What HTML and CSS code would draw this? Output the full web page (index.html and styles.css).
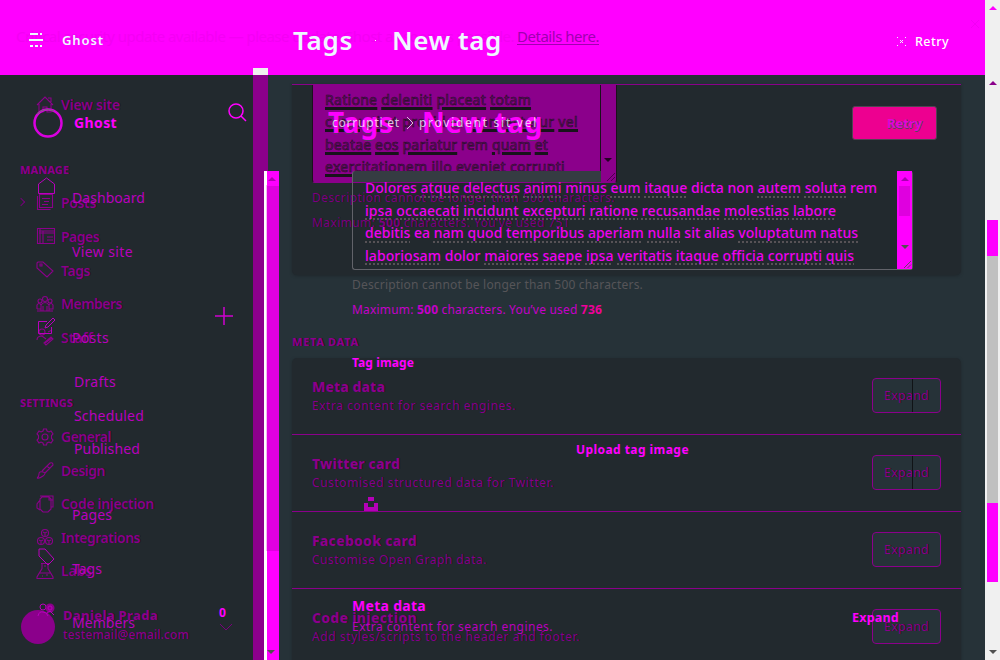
FILE: index.html
```
<!DOCTYPE html>
<html lang="en"><head><meta charset="utf-8"><title>Ghost</title><link rel="stylesheet" href="styles.css"></head>
<body><div class="screen">
<div class="banner">
  <div class="notice"><span data-w="498">Critical security update available — please update Ghost as soon as possible.</span><u data-w="82">Details here.</u></div>
  <svg class="notice-close" viewBox="0 0 8 8"><path d="M0 0l8 8M8 0L0 8"/></svg>
  <div class="bar"><svg class="menu" viewBox="0 0 14 14"><path d="M1 1h8m2 0h2M0 7h14M1 13h3m2 0h3m2 0h2"/></svg><b class="bar-site" data-w="42">Ghost</b><strong class="crumb" data-w="60">Tags</strong><i></i><strong class="crumb" data-w="110">New tag</strong><svg class="spark" viewBox="0 0 9 9"><path d="M0 .5h1m7 0h1M0 8.5h1m7 0h1M3 3.5h1m1 0h1M4 4.5h1M3 5.5h1m1 0h1"/></svg><b class="bar-retry" data-w="34">Retry</b></div>
</div>
<div class="app">
<aside class="side">
  <div class="nav first"><svg viewBox="0 0 16 16"><path d="M0 8L8 0l8 8M2 7v8h4v-5h4v5h4V7M11 1h3v4"/></svg><span data-w="59">View site</span></div>
  <h6 class="manage" data-w="49">MANAGE</h6>
  <div class="nav posts"><em></em><svg viewBox="0 0 16 16"><path d="M2.5.5h13v13h-13zM.5 2v13.5h13M5 4.5h8M7 7.5h5M5 10.5h6"/></svg><span data-w="35">Posts</span></div>
  <div class="nav pages-old"><svg viewBox="0 0 18 17"><path d="M.5.5h17v15H.5zM2 5h16M2 3h16M6 3v13M10 9h6M10 12h6M3 0v16"/></svg><span data-w="38">Pages</span></div>
  <div class="nav"><svg viewBox="0 0 16 16"><path d="M0 1l1-1h5l10 9-6 6L0 6zM3 2v2h2V2z"/></svg><span data-w="29">Tags</span></div>
  <div class="nav"><svg viewBox="0 0 16 16"><circle cx="8" cy="3" r="2.5"/><circle cx="3" cy="5" r="2"/><circle cx="13" cy="5" r="2"/><path d="M4 15V9q4-5 8 0v6M0 13V9q2-3 4 0v4H0m12 0V9q2-3 4 0v4h-4M6 15v-5m4 5v-5M0 15h16"/></svg><span data-w="61">Members</span></div>
  <div class="nav"><svg viewBox="0 0 16 16"><circle cx="5" cy="3" r="3"/><path d="M0 11q0-4 5-4l4 3M7 14l7-6 2 2-7 6zM11 3l4-2M8 14l7-5"/></svg><span data-w="32">Staff</span></div>
  <h6 class="settings" data-w="53">SETTINGS</h6>
  <div class="nav"><svg viewBox="0 0 16 16"><circle cx="8" cy="8" r="3"/><path d="M6.500 0h3l.5 2 2 1 2-1 2 3-1.500 1.500v3L16 11l-2 3-2-1-2 1-.5 2h-3L6 14l-2-1-2 1-2-3 1.500-1.500v-3L0 5l2-3 2 1 2-1z"/></svg><span data-w="50">General</span></div>
  <div class="nav"><svg viewBox="0 0 16 16"><path d="M0 16q2-1 2-4t4-2 0 4-6 2M5 9l8-8q3-1 3 2l-8 8M10 4l3 3"/></svg><span data-w="44">Design</span></div>
  <div class="nav"><svg viewBox="0 0 16 16"><path d="M5 1h7l2 2v10l-3 3H6l-3-3V3zM3 4L0 8v4l3 2M3 0h13v11h-2M12 1v3h4"/></svg><span data-w="93">Code injection</span></div>
  <div class="nav"><svg viewBox="0 0 16 16"><circle cx="8" cy="4" r="3.500"/><circle cx="4" cy="12" r="3.500"/><circle cx="12" cy="12" r="3.500"/><path d="M6 3l2 1 2-1M8 4v3M2 11l2 1 2-1M4 12v3M10 11l2 1 2-1M12 12v3"/></svg><span data-w="79">Integrations</span></div>
  <div class="nav"><svg viewBox="0 0 16 16"><path d="M4 .5h8M5 .5v5L0 14v1.500h16V14l-5-8.500v-5M3 10h10M5 13h1M9 12h2M7 3h2"/></svg><span data-w="31">Labs</span></div>
  <div class="user"><div class="avatar"></div><div><b data-w="95">Daniela Prada</b><p data-w="126">testemail@email.com</p></div></div>
</aside>
<div class="side-track"><s class="down"></s></div>
<main class="main">
  <section class="card top"><div class="old-area"><div class="old-copy">
    <p data-w="206"><u>Ratione</u> <u>deleniti</u> <u>placeat</u> <u>totam</u></p><p data-w="253"><u>corrupti</u> et provident <u>consectetur</u> <u>vel</u></p><p data-w="223"><u>beatae</u> <u>eos</u> <u>pariatur</u> rem <u>quam</u> <u>et</u></p><p data-w="240"><u>exercitationem</u> <u>illo</u> <u>eveniet</u> <u>corrupti</u></p></div><div class="old-track"><s class="down"></s><svg viewBox="0 0 8 8"><path d="M0 8L8 0M4 8l4-4"/></svg></div></div>
    <p class="old-help" data-w="303">Description cannot be longer than 500 characters.</p><p class="old-help max" data-w="258">Maximum: <b>500</b> characters. You’ve used 751</p></section>
  <h6 class="meta" data-w="67">META DATA</h6>
  <section class="card options">
    <div class="option"><div><h4 data-w="73">Meta data</h4><p data-w="204">Extra content for search engines.</p></div><button class="split"><span data-w="45">Expand</span></button></div>
    <div class="option"><div><h4 data-w="88">Twitter card</h4><p data-w="242">Customised structured data for Twitter.</p></div><button class="split"><span data-w="45">Expand</span></button></div>
    <div class="option"><div><h4 data-w="105">Facebook card</h4><p data-w="175">Customise Open Graph data.</p></div><button><span data-w="45">Expand</span></button></div>
    <div class="option"><div><h4 data-w="105">Code injection</h4><p data-w="268">Add styles/scripts to the header and footer.</p></div><button><span data-w="45">Expand</span></button></div>
  </section>
</main>
<div class="page-scroll"><s class="up hot"></s><s class="up dim"></s><div class="thumb"></div><s class="down"></s></div>
</div>
<div class="overlay">
<aside class="front-side">
  <div class="brand"><svg class="ring" viewBox="0 0 32 32"><circle cx="16" cy="16" r="13.500"/><path d="M5 7Q12 0 22 4"/></svg><b data-w="43">Ghost</b><svg class="search" viewBox="0 0 19 19"><circle cx="8" cy="8" r="7"/><path d="M13 13l5 5"/></svg></div>
  <div class="link dash"><svg viewBox="0 0 17 17"><path d="M.5 6l8-6 8 6v9.500H.5z"/></svg><span data-w="73">Dashboard</span></div>
  <div class="link view"><span data-w="61">View site</span></div>
  <div class="link write"><svg viewBox="0 0 17 17"><path d="M9 3.500H.5v12h13V9M7 10l1-3 7-7 2 2-7 7z"/></svg><span data-w="37">Posts</span><svg class="plus" viewBox="0 0 18 18"><path d="M9 0v18M0 9h18"/></svg></div>
  <div class="link drafts"><span data-w="42">Drafts</span></div><div class="link sched"><span data-w="70">Scheduled</span></div><div class="link pub"><span data-w="66">Published</span></div>
  <div class="link pages"><svg viewBox="0 0 17 17"></svg><span data-w="40">Pages</span></div>
  <div class="link tags"><svg viewBox="0 0 17 17"><path d="M1 0h6l9 10-6 6L1 7z"/></svg><span data-w="30">Tags</span></div>
  <div class="link members"><svg viewBox="0 0 17 17"><circle cx="5" cy="4" r="3"/><circle cx="12" cy="5" r="4.500" fill="#8b008b" stroke="none"/><circle cx="12" cy="5" r="2"/><path d="M0 13q1-5 5-4 4 0 5 4M9 10l3-2 4 4"/></svg><span data-w="63">Members</span></div>
</aside>
<div class="edge"><div class="slot"></div></div>
<div class="front-scroll"><s class="up"></s><div class="thumb"></div><s class="down"></s></div>
<section class="front-main">
  <div class="heading"><div class="title"><strong data-w="66">Tags</strong><strong class="new" data-w="121">New tag</strong><div class="ghost-line"><span data-w="68">corrupti et</span><svg viewBox="0 0 7 12"><path d="M0 0l6 6-6 6"/></svg><span data-w="119">provident sit vel</span></div></div><button><b data-w="35">Retry</b></button></div>
  <div class="area"><div class="copy"><p data-w="512">Dolores <u>atque</u> <u>delectus</u> <u>animi</u> minus <u>eum</u> <u>itaque</u> dicta non <u>autem</u> <u>soluta</u> rem</p><p data-w="471"><u>ipsa</u> <u>occaecati</u> <u>incidunt</u> <u>excepturi</u> <u>ratione</u> <u>recusandae</u> <u>molestias</u> <u>labore</u></p><p data-w="493"><u>debitis</u> ea <u>nam</u> <u>quod</u> <u>temporibus</u> <u>aperiam</u> <u>nulla</u> sit alias <u>voluptatum</u> <u>natus</u></p><p data-w="489"><u>laboriosam</u> dolor <u>maiores</u> <u>saepe</u> <u>ipsa</u> <u>veritatis</u> <u>itaque</u> <u>officia</u> <u>corrupti</u> <u>quis</u></p></div><div class="area-track"><s class="up"></s><div class="thumb"></div><s class="down"></s><svg viewBox="0 0 8 8"><path d="M0 8L8 0M4 8l4-4"/></svg></div></div>
  <p class="help grey" data-w="291">Description cannot be longer than 500 characters.</p>
  <p class="help" data-w="250">Maximum: <b>500</b> characters. You’ve used <b class="count">736</b></p>
  <h5 class="tag-image" data-w="62">Tag image</h5><h5 class="upload" data-w="113">Upload tag image</h5>
  <svg class="unsplash" viewBox="0 0 14 14"><path d="M4 0h6v4H4zM0 6h4v4h6V6h4v8H0z"/></svg>
  <div class="front-meta"><div><h4 data-w="74">Meta data</h4><p data-w="201">Extra content for search engines.</p></div><b data-w="47">Expand</b></div>
</section>
<div class="counter"><b data-w="7">0</b><svg viewBox="0 0 12 7"><path d="M0 0l6 6 6-6"/></svg></div>
</div>
</div><script src="fit.js"></script></body></html>
```
FILE: styles.css
```
*{box-sizing:border-box}
body{margin:0;background:#263238;font-family:"Noto Sans","Open Sans",sans-serif;overflow:hidden}
p,h4,h5,h6{margin:0;white-space:nowrap}
span,b,strong{white-space:nowrap}
[data-w]{width:max-content}
span[data-w],b[data-w],u[data-w],strong[data-w]{display:block}
svg{fill:none;stroke:currentColor;stroke-width:1;display:block;flex:none;overflow:visible}
button{font:inherit;color:inherit;padding:0}
s{display:block;width:0;height:0;border:4px solid transparent;flex:none;color:#505050}
.up{border-top:0;border-bottom-color:currentColor}
.down{border-bottom:0;border-top-color:currentColor}
.screen{position:relative;width:1000px;height:660px;overflow:hidden;color:#8b008b}
.banner{position:absolute;z-index:3;left:0;top:0;width:985px;height:75px;background:#f0f}
.notice{display:flex;gap:3px;padding:25px 0 0 16px;height:50px;font-size:15px;line-height:22px;color:#f400f4}
.notice u{color:#a000b0;text-underline-offset:2px}
.notice-close{position:absolute;left:971px;top:20px;width:8px;color:#f200f4}
.bar{position:absolute;left:0;top:23px;width:985px;height:34px;display:flex;align-items:center;color:#eef8ff}
.menu{width:14px;height:14px;margin-left:29px;stroke-width:2.2}
.bar-site{margin-left:19px;font-size:13px;font-weight:600}
.crumb{font-size:26px;line-height:34px;font-weight:600}
.bar-site+.crumb{margin-left:189px}
.bar i{width:1px;height:1px;background:#fff;margin:0 16px 0 22px}
.spark{width:9px;height:9px;margin:2px 0 0 395px}
.bar-retry{margin:2px 0 0 9px;font-size:12.5px;font-weight:500;color:#fff}
.app{display:grid;grid-template-columns:253px 15px 717px 15px;height:660px}
.side{background:#22292e;padding-top:88px;text-shadow:1px 0 0 #17171b}
.nav{height:33.5px;display:flex;align-items:center;padding-left:37px;font-size:14px;font-weight:600}
.nav svg{width:16px;height:16px;margin-right:8px;stroke-width:1.1}
.pages-old svg{width:18px;height:17px;margin:0 6px 0 0}
.pages-old{margin-top:1px}
.nav em{width:6px;height:6px;border:solid #75007a;border-width:1px 1px 0 0;transform:rotate(45deg);margin:0 13px 0 -19px;flex:none}
.side h6,.meta{font-size:11px;line-height:14px;font-weight:800}
.side h6{margin-left:20px}
.manage{margin-top:41px!important;margin-bottom:9px!important}
.settings{margin-top:42px!important;margin-bottom:10px!important}
.user{display:flex;padding:16px 0 0 21px;gap:8px;align-items:flex-start}
.avatar{width:34px;height:34px;border-radius:50%;background:#8b008b;margin-top:6px}
.user b{font-size:13px;line-height:22px;font-weight:800}
.user p{font-size:12px;line-height:18px;font-weight:500}
.side-track{background:#8b008b;display:flex;align-items:flex-end;padding:0 0 6px 3px}
.side-track s{color:#260026}
.main{padding:84px 24px 0 24px;box-shadow:inset 8px 0 #263238}
.card{background:#22292e;border-top:1px solid #8b008b;border-radius:0 0 5px 5px;box-shadow:0 1px 3px #20272c}
.top{height:191px;padding-left:20px;text-shadow:1px 0 0 #19191d}
.old-area{width:305px;height:98px;background:#8b008b;border:1px solid #1a111c;border-top:0;border-bottom-color:#8b008b;display:flex;border-radius:0 0 3px 3px;margin-bottom:5px}
.old-copy{width:287px;padding:4px 0 0 12px;font-size:14px;line-height:22.4px;color:#7a007b;-webkit-text-stroke:.6px #221322;text-shadow:none}
.old-copy u{text-decoration:underline 3px #17131a;text-underline-offset:2px}
.old-track{border-left:1px solid #1a111c;flex:1;padding:73px 0 0 3px}
.old-track s{color:#240024}
.old-track svg{width:8px;height:8px;margin:11px 0 0 3px;color:#4a004d}
.old-help{font-size:12px;line-height:20px;color:#7c0080}
.max{margin-top:5px}
.meta{margin-top:60px;color:#8b008b;text-shadow:1px 0 #15151a}
.options{margin-top:9px;border-top:0;border-radius:5px;height:320px}
.option{height:77px;border-bottom:1px solid #8b008b;padding:20px 20px 0 20px;display:flex;justify-content:space-between;text-shadow:1px 0 0 #17171b}
.option h4{font-size:14px;line-height:18px;font-weight:800}
.option p{font-size:12px;line-height:19px;color:#85008a}
.option button{position:relative;width:69px;height:35px;background:#263238;border:1px solid #8b008b;border-radius:4px;padding-left:11px;font-size:12.5px;text-align:left;text-shadow:1px 0 #17171b}
.split:after{content:"";position:absolute;left:39px;top:0;width:1px;height:33px;background:#101316}
.page-scroll{background:#f0f0f0;padding:6px 0 6px 2px;display:flex;flex-direction:column}
.page-scroll s{margin-left:2px}
.page-scroll .hot{color:#f0f}
.page-scroll .dim{color:#8b008b;margin-top:71px}
.page-scroll .thumb{width:11px;height:362px;margin:135px 0 68px;background:linear-gradient(#f0f 36px,silver 36px 283px,#f0f 283px)}
.overlay{position:absolute;inset:0;display:grid;grid-template-columns:264px 15px 706px;color:#f0f}
.front-side{padding-top:103px;color:#b900bd}
.brand{height:38px;display:flex;align-items:center;padding-left:32px;color:#f0f}
.ring{width:32px;height:32px;stroke-width:2.5;margin:2px 10px 0 0;color:#d900df}
.ring path{stroke:#6f6872;stroke-width:1}
.brand b{font-size:14px}
.search{width:19px;height:19px;margin:-19px 0 0 111px;stroke-width:1.5}
.link{height:20px;display:flex;align-items:center;padding-left:38px;font-size:14px}
.link svg{width:17px;height:17px;margin:-22px 17px 0 0}
.link .plus{width:18px;height:18px;margin:-42px 0 0 106px;stroke-width:1.5;color:#d000d0}
.dash{margin-top:46px}.view{margin-top:34px;padding-left:72px}.write{margin-top:66px}
.drafts{margin-top:24px;padding-left:74px}.sched{margin-top:14px;padding-left:74px}.pub{margin-top:13px;padding-left:74px}
.pages{margin-top:46px}.tags{margin-top:34px}.members{margin-top:34px}
.members svg{width:17px;height:17px}
.front-scroll{margin-top:171px;background:linear-gradient(#f0f 15px,#e000e0 15px 380px,#f0f 380px);display:flex;flex-direction:column;padding:6px 0;border-left:3px solid #fff}
.front-scroll .up{color:#b000b4;margin-left:1px}
.front-scroll .thumb{width:1px;height:366px;margin-top:4px;background:#f5b7f5;margin-left:-1px}
.front-scroll .down{margin-top:99px}
.edge{position:absolute;left:253px;top:68px;width:15px;height:7px;z-index:5}
.slot{background:#f0f0f0;height:7px}
.front-main{padding-top:104px}
.heading{height:67px;display:flex;justify-content:space-between;align-items:flex-start;padding:1px 48px 0 49px}
.title{display:flex;gap:28px;position:relative;font-size:28px;line-height:34px;text-shadow:0 1px #533a60}
.title strong{font-weight:700}
.ghost-line{position:absolute;left:4px;top:10px;display:flex;align-items:center;gap:5px;font-size:12px;line-height:15px;color:#fff;text-shadow:none;opacity:.75}
.ghost-line svg{width:7px;height:12px;margin-left:2px}
.heading button{width:85px;height:34px;margin-top:1px;border:1px solid #514453;border-radius:3px;background:#ed0090;padding-left:34px;font-size:13px;text-align:left;text-shadow:1px 0 #59455b,0 1px #59455b;color:#e600dd}
.area{margin-left:73px;width:561px;height:99px;border:1px solid #62636a;border-top:0;border-right-color:#555;border-radius:3px;display:flex;background:linear-gradient(#353c42,#353c42) 0 0/248px 11px no-repeat}
.copy{width:544px;padding:6px 0 0 12px;font-size:14px;line-height:22.6px;font-weight:500;color:#ef00ef}
.copy u{text-decoration:underline dotted 1.5px #575256;text-underline-offset:3px;text-decoration-skip-ink:none}
.area-track{width:15px;background:#f0f;padding:6px 0 0 2px;color:#505050}
.area-track .up{color:#a800b0;margin-left:2px}
.area-track .down{margin:29px 0 0 2px}
.area-track .thumb{width:11px;height:30px;margin-top:5px;background:#df00df}
.area-track svg{width:7px;height:7px;margin:12px 0 0 5px}
.help{font-size:12px;line-height:20px;margin:5px 0 0 73px;color:#c500c9}
.grey{color:#565558}
.count{color:#f00098}
.front-main h5{font-size:12px;line-height:18px}
.tag-image{margin:34px 0 0 73px}.upload{margin:69px 0 0 297px}
.unsplash{width:14px;height:14px;fill:#b500b8;stroke:none;margin:38px 0 0 85px}
.front-meta{margin:85px 86px 0 73px;display:flex;justify-content:space-between}
.front-meta h4{font-size:14px;line-height:20px}.front-meta p{font-size:12px;line-height:21px;color:#b900bd}
.front-meta>b{font-size:12.5px;line-height:18px;margin-top:13px}
.counter{position:absolute;left:219px;top:604px;font-size:12px;line-height:17px}
.counter svg{width:12px;height:7px;margin:3px 0 0 1px;color:#79007c}
```
FILE: fit.js
```
// Track every label to the width reserved for it.
document.querySelectorAll('[data-w]').forEach(function (el) {
  var gap = (Number(el.dataset.w) - el.getBoundingClientRect().width) / el.textContent.length;
  el.style.letterSpacing = gap + 'px';
});
```
